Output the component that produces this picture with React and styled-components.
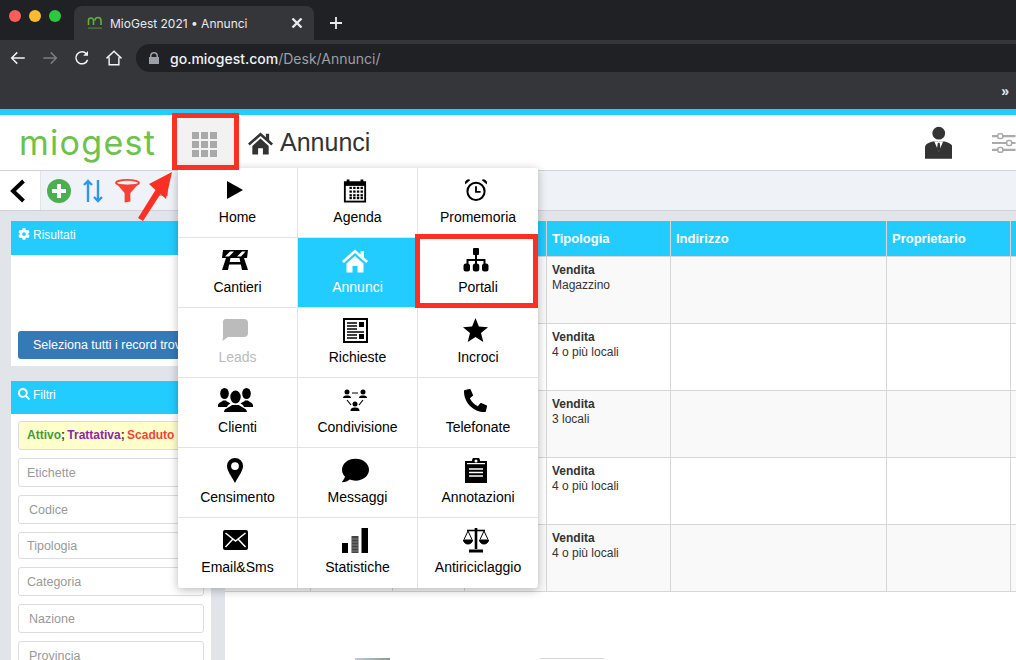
import React from "react";
import styled, { createGlobalStyle } from "styled-components";
import { FaPhoneAlt, FaComment, FaCog, FaSearch } from "react-icons/fa";

const Global = createGlobalStyle`
  html, body { margin: 0; padding: 0; background: #fff; }
  * { box-sizing: border-box; }
`;

const Page = styled.div`
  position: relative;
  width: 1016px;
  height: 660px;
  overflow: hidden;
  font-family: "Liberation Sans", Arial, sans-serif;
  background: #e1e5ea;
`;

/* browser chrome */
const TabStrip = styled.div`
  height: 40px;
  background: #202124;
  display: flex;
  align-items: flex-end;
`;
const Lights = styled.div`
  width: 74px;
  height: 38px;
  padding: 0 0 6px 9px;
  display: flex;
  align-items: center;
  gap: 8px;
  align-self: flex-start;
`;
const Light = styled.span`
  width: 12px;
  height: 12px;
  border-radius: 50%;
  background: ${(p) => p.$c};
`;
const Tab = styled.div`
  width: 240px;
  height: 34px;
  background: #35363a;
  border-radius: 8px 8px 0 0;
  display: flex;
  align-items: center;
  padding: 0 10px 0 13px;
  color: #e8eaed;
  font: 400 12px Inter, sans-serif;
  gap: 7px;
`;
const TabTitle = styled.span`
  flex: 1;
  white-space: nowrap;
`;
const NewTab = styled.div`
  width: 44px;
  height: 34px;
  display: flex;
  align-items: center;
  justify-content: center;
`;
const NavBar = styled.div`
  height: 32px;
  background: #35363a;
  display: flex;
  align-items: flex-start;
  padding: 4px 0 0 2px;
`;
const NavButton = styled.div`
  width: 32px;
  height: 28px;
  display: flex;
  align-items: center;
  justify-content: center;
  color: ${(p) => (p.$off ? "#7b7d80" : "#f1f3f4")};
`;
const Omnibox = styled.div`
  flex: 1;
  height: 28px;
  margin-left: 6px;
  border-radius: 14px 0 0 14px;
  background: #202124;
  display: flex;
  align-items: center;
  padding-left: 13px;
  gap: 11px;
  font: 400 14px Inter, sans-serif;
  color: #9aa0a6;
`;
const Host = styled.span`
  color: #f1f3f4;
  font-weight: 500;
`;
const BookmarkBar = styled.div`
  height: 37px;
  background: #35363a;
  display: flex;
  justify-content: flex-end;
  align-items: flex-end;
  padding: 0 7px 10px 0;
  color: #e8eaed;
  font: 700 14px "Liberation Sans", sans-serif;
`;

/* app header */
const TopStripe = styled.div`
  height: 6px;
  background: #22ccff;
`;
const Header = styled.header`
  height: 56px;
  background: #fff;
  border-bottom: 1px solid #cfd2d6;
  display: flex;
  align-items: center;
  padding-left: 19px;
`;
const Logo = styled.div`
  width: 157px;
  font: 400 34px Inter, sans-serif;
  letter-spacing: 1.3px;
  line-height: 55px;
  height: 55px;
  color: #6cc24a;
`;
const AppsButton = styled.div`
  width: 60px;
  height: 55px;
  background: #f2f2f2;
  padding: 4px 3px 0 0;
  display: flex;
  align-items: center;
  justify-content: center;
`;
const AppsGrid = styled.div`
  display: grid;
  grid-template-columns: repeat(3, 7px);
  grid-auto-rows: 7px;
  gap: 2px;
`;
const AppsDot = styled.span`
  background: #a9a9a9;
`;
const Title = styled.h1`
  margin: 0 0 0 12px;
  display: flex;
  align-items: center;
  gap: 7px;
  flex: 1;
  font: 400 25px "Liberation Sans", sans-serif;
  color: #333;
`;
const HeaderIcons = styled.div`
  display: flex;
  align-items: center;
  gap: 40px;
  width: 91px;
  flex: none;
  overflow: hidden;
`;

/* toolbar */
const ToolBar = styled.div`
  height: 40px;
  background: #eff2f6;
  border-bottom: 1px solid #cfd2d6;
  display: flex;
`;
const BackCell = styled.div`
  width: 41px;
  background: #fff;
  border-right: 1px solid #e1e5ea;
  display: flex;
  align-items: center;
  padding-left: 9px;
`;
const ToolIcons = styled.div`
  display: flex;
  align-items: center;
  padding-left: 6px;
  gap: 12px;
`;

/* main */
const Main = styled.main`
  display: flex;
  height: 449px;
  padding-top: 10px;
`;
const Sidebar = styled.aside`
  width: 225px;
  flex: none;
  padding: 0 14px 0 11px;
  display: flex;
  flex-direction: column;
  gap: 15px;
`;
const Panel = styled.section`
  background: #fff;
  flex: none;
`;
const PanelHead = styled.div`
  height: ${(p) => p.$h}px;
  background: #22ccff;
  color: #fff;
  font-size: 12px;
  padding: 7px 7px 0;
  display: flex;
  align-items: flex-start;
  gap: 3px;
`;
const ResultBody = styled.div`
  height: 111px;
  padding: 76px 7px 0;
`;
const SelectAll = styled.div`
  height: 28px;
  background: #337ab7;
  border-radius: 3px;
  color: #fff;
  font-size: 12.5px;
  line-height: 28px;
  padding-left: 15px;
  white-space: nowrap;
  overflow: hidden;
`;
const FilterBody = styled.div`
  padding: 7px 7px 20px;
  display: flex;
  flex-direction: column;
  gap: 8px;
`;
const StatusBox = styled.div`
  height: 29px;
  background: #ffffcc;
  border: 1px solid #ddd;
  border-radius: 3px;
  padding-left: 8px;
  line-height: 27px;
  font-size: 12px;
  font-weight: 700;
  word-spacing: -1px;
  color: #333;
  white-space: nowrap;
`;
const Status = styled.span`
  color: ${(p) => p.$c};
`;
const Field = styled.input`
  display: block;
  width: 100%;
  height: ${(p) => p.$h || 29}px;
  flex: none;
  border: 1px solid #ddd;
  border-radius: 3px;
  padding: 0 0 0 ${(p) => p.$indent}px;
  font: 400 12.5px "Liberation Sans", sans-serif;
  background: #fff;
  &::placeholder { color: #999; opacity: 1; }
`;

const TableArea = styled.div`
  flex: 1;
  background: #fff;
  min-width: 0;
  overflow: hidden;
`;
const GridRow = styled.div`
  display: grid;
  grid-template-columns: 86px 82px 72px 82px 124px 216px 124px 10px;
  height: ${(p) => p.$h}px;
  background: ${(p) => p.$bg};
  border-bottom: 1px solid #d6d6d6;
`;
const HeadCell = styled.div`
  border-right: 1px solid #d6d6d6;
  color: #fff;
  font-size: 13px;
  font-weight: 700;
  padding: 10px 5px 0;
`;
const Cell = styled.div`
  border-right: 1px solid #d6d6d6;
  color: #333;
  font-size: 12px;
  line-height: 15px;
  padding: 6px 5px 0;
`;
const Strong = styled.div`
  font-weight: 700;
`;
const NextTable = styled.div`
  margin-top: 66px;
  display: flex;
  height: 3px;
  padding-left: 130px;
  gap: 150px;
`;
const Thumb = styled.div`
  width: 35px;
  background: linear-gradient(90deg, #b8cdd6, #8a9a92);
`;
const NextLine = styled.div`
  width: 64px;
  height: 1px;
  background: #d6d6d6;
`;

/* menu */
const Menu = styled.nav`
  position: absolute;
  left: 178px;
  top: 168px;
  width: 360px;
  height: 420px;
  background: #fff;
  border-radius: 0 0 3px 3px;
  box-shadow: 0 2px 10px rgba(0, 0, 0, 0.28);
  display: grid;
  grid-template-columns: repeat(3, 120px);
  grid-auto-rows: 70px;
`;
const MenuCell = styled.div`
  position: relative;
  display: flex;
  flex-direction: column;
  align-items: center;
  padding-top: 9px;
  background: ${(p) => (p.$active ? "#22ccff" : "transparent")};
  color: ${(p) => (p.$active ? "#fff" : p.$muted ? "#bbb" : "#000")};
  border-right: ${(p) => (p.$last ? "none" : "1px solid #e3e3e3")};
  border-bottom: ${(p) => (p.$end ? "none" : "1px solid #e3e3e3")};
  font-size: 14px;
`;
const MenuIcon = styled.div`
  height: 26px;
  padding-right: 5px;
  display: flex;
  align-items: center;
  justify-content: center;
  margin-bottom: 5px;
`;
const MenuLabel = styled.span`
  line-height: 18px;
  white-space: nowrap;
`;
const Highlight = styled.div`
  position: absolute;
  left: -3px;
  right: 0;
  top: -4px;
  bottom: -1px;
  border: 5px solid #fb3023;
  pointer-events: none;
`;
const AppsHighlight = styled.div`
  position: absolute;
  left: 172px;
  top: 113px;
  width: 67px;
  height: 57px;
  border: 5px solid #fb3023;
`;
const Arrow = styled.svg`
  position: absolute;
  left: 130px;
  top: 165px;
`;

const Stroke = ({ size = 24, children, ...r }) => (
  <svg width={size} height={size} viewBox="0 0 24 24" fill="none" stroke="currentColor" {...r}>
    {children}
  </svg>
);

const PlayIcon = () => (
  <svg width="16" height="18" viewBox="0 0 16 18">
    <path d="M0 0 16 9 0 18z" fill="#000" />
  </svg>
);
const StarIcon = () => (
  <svg width="25" height="24" viewBox="0 0 25 24">
    <path d="M12.500 0l3.400 8.600 9.100.6-7 5.900 2.300 8.900-7.800-4.900-7.800 4.900 2.300-8.900-7-5.900 9.100-.6z" fill="#000" />
  </svg>
);
const SitemapIcon = () => (
  <svg width="26" height="24" viewBox="0 0 26 24" fill="#000">
    <rect x="10" y="0" width="6" height="7" rx="1" />
    <path d="M12 6h2v5h8.500v6h-2v-4H14v4h-2v-4H5.500v4h-2v-6H12z" />
    <rect x="0.500" y="15.500" width="6.500" height="8" rx="2.500" />
    <rect x="9.800" y="15.500" width="6.500" height="8" rx="2.500" />
    <rect x="19" y="15.500" width="6.500" height="8" rx="2.500" />
  </svg>
);
const ScaleIcon = () => (
  <svg width="26" height="25" viewBox="0 0 26 25" fill="none" stroke="#000">
    <path d="M13 0v21" strokeWidth="2.600" />
    <path d="M6 23h14" strokeWidth="3" />
    <path d="M4 2.500h18" strokeWidth="1.600" />
    <path d="M5 3 1 11.500M5 3l4 8.500M21 3l-4 8.500M21 3l4 8.500" strokeWidth="1" />
    <path d="M.5 12h9a4.500 4 0 0 1-9 0zM16.500 12h9a4.500 4 0 0 1-9 0z" fill="#000" strokeWidth="1" />
  </svg>
);
const CalendarIcon = () => (
  <svg width="24" height="25" viewBox="0 0 26 26">
    <path d="M1 3h3V1h3v2h12V1h3v2h3v23H1z" fill="#000" />
    <rect x="3" y="8" width="20" height="16" fill="#fff" />
    {[9, 13, 17, 20].flatMap((y) =>
      [8, 12, 16, 20].map((x) => <rect key={`${x}-${y}`} x={x - 1} y={y} width="2.600" height="2.400" fill="#000" />)
    )}
  </svg>
);
const ClockIcon = () => (
  <svg width="24" height="24" viewBox="0 0 26 26" fill="none" stroke="#000">
    <circle cx="13" cy="14.500" r="9.300" strokeWidth="2.200" />
    <path d="M13 9v6h5" strokeWidth="2" />
    <path d="M1.600 6.200 6.200 2.200A3.400 3.400 0 0 0 1.600 6.200zM24.400 6.200 19.800 2.200A3.400 3.400 0 0 1 24.400 6.200z" fill="#000" strokeWidth="1" />
  </svg>
);
const BarrierIcon = () => (
  <svg width="26" height="20" viewBox="0 0 26 20">
    <path d="M1 0h25l-1 8H0z" fill="#000" />
    <path d="M8 1.400h4L7 6.600H3zM20 1.400h3.500L19 6.600h-4z" fill="#fff" />
    <path d="M4 8h4.500L6 20H0zM17.500 8H22l4 12h-6z" fill="#000" />
    <rect x="6" y="12" width="14" height="2.500" fill="#000" />
  </svg>
);
const HomeIcon = ({ size = 25 }) => (
  <svg width={size} height={size - 1} viewBox="0 0 26 24" fill="currentColor">
    <path d="M13 1 0 12.500l1.800 2L13 4.600l11.200 9.900 1.800-2-4-3.600V2.500h-3.400v3.400z" />
    <path d="M4.500 15 13 7.400 21.500 15v9H15.500v-6.500h-5V24H4.500z" />
  </svg>
);
const ChatSquareIcon = () => (
  <svg width="26" height="22" viewBox="0 0 26 22" fill="currentColor">
    <path d="M4 0h18a4 4 0 0 1 4 4v10a4 4 0 0 1-4 4H6l-5.500 4 .5-4V4a3 3 0 0 1 3-4z" />
  </svg>
);
const NewsIcon = () => (
  <svg width="25" height="25" viewBox="0 0 25 25">
    <rect x="1" y="1" width="23" height="23" fill="none" stroke="#000" strokeWidth="2" />
    <rect x="16" y="4" width="5" height="5" fill="#000" />
    <path d="M4 5h10M4 8h10M4 11h10M4 14h17M4 17h10M4 20h10" stroke="#000" strokeWidth="1.600" />
    <rect x="16" y="16" width="5" height="5" fill="#000" />
  </svg>
);
const PeopleIcon = () => (
  <svg width="35" height="24" viewBox="0 0 35 24" fill="#000">
    <ellipse cx="6.500" cy="5.500" rx="4.300" ry="5.500" />
    <path d="M0 17.500c0-3 4-3.500 5-5h3c1 1.500 3 1.800 4.500 3-2 1-3 2-3.500 3.500H0z" />
    <ellipse cx="28.500" cy="5.500" rx="4.300" ry="5.500" />
    <path d="M35 17.500c0-3-4-3.500-5-5h-3c-1 1.500-3 1.800-4.500 3 2 1 3 2 3.500 3.500h9z" />
    <ellipse cx="17.500" cy="9" rx="5.200" ry="6.500" />
    <path d="M6 24c0-4 6-4.500 8-7h7c2 2.500 8 3 8 7z" />
  </svg>
);
const ShareIcon = () => (
  <svg width="26" height="24" viewBox="0 0 26 24" fill="#000">
    <circle cx="5" cy="4" r="2.500" />
    <path d="M1 10c0-2 2-2.500 4-2.500s4 .5 4 2.500z" />
    <circle cx="21" cy="4" r="2.500" />
    <path d="M17 10c0-2 2-2.500 4-2.500s4 .5 4 2.500z" />
    <circle cx="13" cy="16" r="2.500" />
    <path d="M8.500 23c0-3 2-3.500 4.500-3.500s4.500 .5 4.500 3.500z" />
    <path d="M10 5h6M5 12l4 5M21 12l-4 5" stroke="#000" strokeWidth="1.200" fill="none" />
  </svg>
);
const PinIcon = () => (
  <svg width="16" height="25" viewBox="0 0 16 25">
    <path fillRule="evenodd" d="M8 0a8 8 0 0 1 8 8c0 5-5 11-8 17C5 19 0 13 0 8a8 8 0 0 1 8-8zm0 4.200a3.900 3.900 0 1 0 0 7.800 3.900 3.900 0 0 0 0-7.800z" fill="#000" />
  </svg>
);
const ClipboardIcon = () => (
  <svg width="22" height="25" viewBox="0 0 22 25">
    <path d="M0 3h7a4 4 0 0 1 8 0h7v22H0z" fill="#000" />
    <circle cx="11" cy="3" r="1.500" fill="#fff" />
    <path d="M4 11h14M4 14.500h14M4 18h14" stroke="#fff" strokeWidth="1.400" />
    <rect x="2" y="5" width="18" height="1.200" fill="#fff" />
  </svg>
);
const MailIcon = () => (
  <svg width="25" height="20" viewBox="0 0 25 20">
    <rect width="25" height="20" rx="2" fill="#000" />
    <path d="M2.500 3 12.500 11 22.500 3M2.500 17l7-7.500M22.500 17l-7-7.500" stroke="#fff" strokeWidth="1.500" fill="none" />
  </svg>
);
const BarsIcon = () => (
  <svg width="26" height="25" viewBox="0 0 26 25" fill="#000">
    <rect x="0" y="15" width="6" height="10" />
    <rect x="9.500" y="8" width="7" height="17" fill="#444" />
    <path d="M9.500 11h7M9.500 14h7M9.500 17h7M9.500 20h7M9.500 23h7" stroke="#999" strokeWidth=".7" />
    <rect x="19.500" y="0" width="6.500" height="25" />
  </svg>
);
const UserIcon = () => (
  <svg width="28" height="33" viewBox="0 0 28 33">
    <circle cx="14" cy="7" r="6.500" fill="#333" />
    <path d="M0 33V22c0-4 3-5 8-6.500l5 0 1 1 1-1 5 0c5 1.500 8 2.500 8 6.500v11z" fill="#333" />
    <path d="M9.500 15.500 14 26l4.500-10.500-3 0-1.500 1-1.500-1z" fill="#fff" />
    <path d="M13 17h2l.8 6L14 26l-1.800-3z" fill="#333" />
  </svg>
);
const SlidersIcon = () => (
  <svg width="24" height="22" viewBox="0 0 24 22" fill="none" stroke="#aaa" strokeWidth="2.200">
    <path d="M0 4h6M11 4h13M0 11h15M20 11h4M0 18h6M11 18h13" />
    <rect x="6" y="1.500" width="5" height="5" rx="1.500" strokeWidth="1.600" />
    <rect x="15" y="8.500" width="5" height="5" rx="1.500" strokeWidth="1.600" />
    <rect x="6" y="15.500" width="5" height="5" rx="1.500" strokeWidth="1.600" />
  </svg>
);

const items = [
  ["Home", <PlayIcon />],
  ["Agenda", <CalendarIcon />],
  ["Promemoria", <ClockIcon />],
  ["Cantieri", <BarrierIcon />],
  ["Annunci", <HomeIcon size={26} />, "active"],
  ["Portali", <SitemapIcon />, "hl"],
  ["Leads", <ChatSquareIcon />, "muted"],
  ["Richieste", <NewsIcon />],
  ["Incroci", <StarIcon />],
  ["Clienti", <PeopleIcon />],
  ["Condivisione", <ShareIcon />],
  ["Telefonate", <FaPhoneAlt size={23} />],
  ["Censimento", <PinIcon />],
  ["Messaggi", <FaComment size={27} />],
  ["Annotazioni", <ClipboardIcon />],
  ["Email&Sms", <MailIcon />],
  ["Statistiche", <BarsIcon />],
  ["Antiriciclaggio", <ScaleIcon />],
];

const headers = ["", "", "", "", "Tipologia", "Indirizzo", "Proprietario", ""];
const rows = ["Magazzino", "4 o più locali", "3 locali", "4 o più locali", "4 o più locali"];

export default function App() {
  return (
    <Page>
      <Global />
      <TabStrip>
        <Lights>
          <Light $c="#f95f58" />
          <Light $c="#fdbb2e" />
          <Light $c="#2cc840" />
        </Lights>
        <Tab>
          <svg width="16" height="16" viewBox="0 0 16 16" fill="none">
            <path d="M1.500 10V5.500a2.500 2.500 0 0 1 5 0V10M8 5.500a2.800 2.800 0 0 1 6 0V10" stroke="#5fb33a" strokeWidth="1.600" />
            <rect x="1" y="12.500" width="14" height="1.200" fill="#5fb33a" opacity=".6" />
          </svg>
          <TabTitle>MioGest 2021 • Annunci</TabTitle>
          <Stroke size={14} strokeWidth="2.400" viewBox="0 0 14 14">
            <path d="M2.500 2.500l9 9M11.500 2.500l-9 9" />
          </Stroke>
        </Tab>
        <NewTab>
          <Stroke size={14} viewBox="0 0 14 14" strokeWidth="1.800" color="#e8eaed">
            <path d="M7 1v12M1 7h12" />
          </Stroke>
        </NewTab>
      </TabStrip>
      <NavBar>
        <NavButton>
          <Stroke size={18} strokeWidth="1.900"><path d="M21 12H4M11 4.500 3.500 12l7.500 7.500" /></Stroke>
        </NavButton>
        <NavButton $off>
          <Stroke size={18} strokeWidth="1.900"><path d="M3 12h17M13 4.500l7.500 7.500-7.500 7.500" /></Stroke>
        </NavButton>
        <NavButton>
          <Stroke size={18} strokeWidth="2"><path d="M19.500 14.500A8 8 0 1 1 18 6.500" /><path d="M20 2.500v6.500h-6.500" fill="currentColor" stroke="none" /></Stroke>
        </NavButton>
        <NavButton>
          <Stroke size={18} strokeWidth="1.900"><path d="M2 12.500 12 3l10 9.500M5.500 11v10h13V11" /></Stroke>
        </NavButton>
        <Omnibox>
          <svg width="10" height="12" viewBox="0 0 10 12">
            <path d="M1 5V4a4 4 0 0 1 8 0v1h1v7H0V5zM2.500 5h5V4a2.500 2.500 0 0 0-5 0z" fill="#9aa0a6" />
          </svg>
          <span><Host>go.miogest.com</Host>/Desk/Annunci/</span>
        </Omnibox>
      </NavBar>
      <BookmarkBar>»</BookmarkBar>
      <TopStripe />
      <Header>
        <Logo>miogest</Logo>
        <AppsButton>
          <AppsGrid>
            {Array.from({ length: 9 }, (_, i) => <AppsDot key={i} />)}
          </AppsGrid>
        </AppsButton>
        <Title>
          <HomeIcon />
          Annunci
        </Title>
        <HeaderIcons>
          <UserIcon />
          <SlidersIcon />
        </HeaderIcons>
      </Header>
      <ToolBar>
        <BackCell>
          <svg width="18" height="24" viewBox="0 0 18 24" fill="none" stroke="#000" strokeWidth="4">
            <path d="M14.500 2 4 12l10.500 10" />
          </svg>
        </BackCell>
        <ToolIcons>
          <svg width="24" height="24" viewBox="0 0 24 24">
            <circle cx="12" cy="12" r="12" fill="#4cae50" />
            <path d="M12 5v14M5 12h14" stroke="#fff" strokeWidth="4" />
          </svg>
          <svg width="20" height="24" viewBox="0 0 20 24" fill="none" stroke="#2f96ef" strokeWidth="2.400">
            <path d="M5 23V2M1 6l4-4 4 4M15 1v21M11 18l4 4 4-4" />
          </svg>
          <svg width="25" height="24" viewBox="0 0 26 24">
            <ellipse cx="13" cy="3.500" rx="12" ry="3" fill="none" stroke="#f44336" strokeWidth="1.800" />
            <path d="M1 4c3 2 21 2 24 0L16 14v9l-6 1V14z" fill="#f44336" />
          </svg>
          <svg width="12" height="10" viewBox="0 0 12 10" style={{ marginLeft: 4 }}>
            <path d="M0 10 12 0v10z" fill="#aaa" />
          </svg>
        </ToolIcons>
      </ToolBar>
      <Main>
        <Sidebar>
          <Panel>
            <PanelHead $h={34}><FaCog size={12} />Risultati</PanelHead>
            <ResultBody>
              <SelectAll>Seleziona tutti i record trovati</SelectAll>
            </ResultBody>
          </Panel>
          <Panel>
            <PanelHead $h={33}><FaSearch size={12} />Filtri</PanelHead>
            <FilterBody>
              <StatusBox>
                <Status $c="#3f9c3f">Attivo</Status>; <Status $c="#8e24aa">Trattativa</Status>; <Status $c="#f44336">Scaduto</Status>
              </StatusBox>
              <Field $indent={8} placeholder="Etichette" />
              <Field $indent={10} placeholder="Codice" />
              <Field $indent={8} $h={27} placeholder="Tipologia" />
              <Field $indent={8} placeholder="Categoria" />
              <Field $indent={10} placeholder="Nazione" />
              <Field $indent={10} placeholder="Provincia" />
            </FilterBody>
          </Panel>
        </Sidebar>
        <TableArea>
          <GridRow $h={36} $bg="#22ccff">
            {headers.map((h, i) => <HeadCell key={i}>{h}</HeadCell>)}
          </GridRow>
          {rows.map((r, i) => (
            <GridRow key={i} $h={67} $bg={i % 2 ? "#fff" : "#f9f9f9"}>
              <Cell /><Cell /><Cell /><Cell />
              <Cell><Strong>Vendita</Strong>{r}</Cell>
              <Cell /><Cell /><Cell />
            </GridRow>
          ))}
          <NextTable>
            <Thumb />
            <NextLine />
          </NextTable>
        </TableArea>
      </Main>
      <Menu>
        {items.map(([label, icon, state], i) => (
          <MenuCell key={label} $active={state === "active"} $muted={state === "muted"} $last={i % 3 === 2} $end={i >= 15}>
            <MenuIcon>{icon}</MenuIcon>
            <MenuLabel>{label}</MenuLabel>
            {state === "hl" && <Highlight />}
          </MenuCell>
        ))}
      </Menu>
      <AppsHighlight />
      <Arrow width="50" height="60" viewBox="0 0 50 60">
        <path d="M42 7 36 34 30.500 29 13 56 8 53 25.500 25 19 19z" fill="#fb3023" />
      </Arrow>
    </Page>
  );
}
